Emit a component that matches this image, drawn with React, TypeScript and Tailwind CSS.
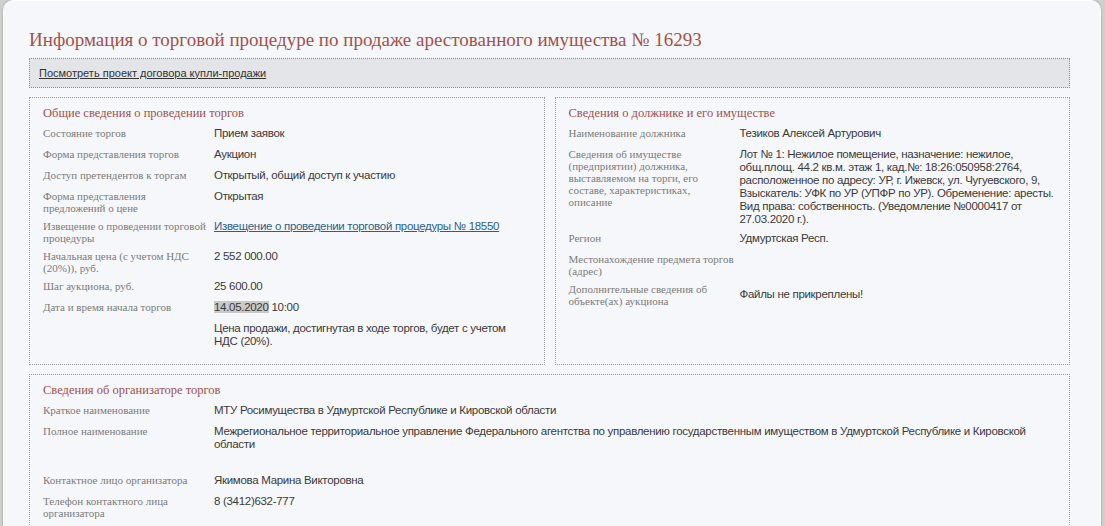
const serif = "font-['Liberation_Serif',Georgia,serif]"
const sans = "font-['Liberation_Sans',Arial,sans-serif] text-[11.5px] tracking-[-0.3px]"

type Row = {
  label: React.ReactNode
  value?: React.ReactNode
  center?: boolean
}

const Label = ({ children }: { children: React.ReactNode }) => (
  <div className={`${serif} text-[11px] leading-[12px] text-[#7b7b7b] whitespace-nowrap`}>{children}</div>
)

const Rows = ({ rows }: { rows: Row[] }) => (
  <div className="flex flex-col">
    {rows.map((r, i) => (
      <div key={i} className="grid grid-cols-[171px_1fr] py-[3px]">
        <Label>{r.label}</Label>
        <div
          className={`${sans} leading-[13px] min-h-[15px] text-[#3a3a3a] ${r.center ? 'self-center' : ''}`}
        >
          {r.value}
        </div>
      </div>
    ))}
  </div>
)

const Box = ({ title, children, className = '' }: { title: string; children: React.ReactNode; className?: string }) => (
  <div className={`border border-dotted border-[#9c9c9c] pl-[13px] pr-[6px] pt-[8px] pb-[13px] ${className}`}>
    <h3 className={`${serif} text-[12.5px] leading-[14px] text-[#a3514b] mb-[4px]`}>{title}</h3>
    {children}
  </div>
)

export default function App() {
  const general: Row[] = [
    { label: 'Состояние торгов', value: 'Прием заявок' },
    { label: 'Форма представления торгов', value: 'Аукцион' },
    { label: 'Доступ претендентов к торгам', value: 'Открытый, общий доступ к участию' },
    { label: <>Форма представления<br />предложений о цене</>, value: 'Открытая' },
    {
      label: <>Извещение о проведении торговой<br />процедуры</>,
      value: (
        <a href="#" className="text-[#2a5f8e] underline">
          Извещение о проведении торговой процедуры № 18550
        </a>
      ),
    },
    { label: <>Начальная цена (с учетом НДС<br />(20%)), руб.</>, value: '2 552 000.00' },
    { label: 'Шаг аукциона, руб.', value: '25 600.00' },
    {
      label: 'Дата и время начала торгов',
      value: (
        <>
          <span className="bg-[#c9c9c9]">14.05.2020</span> 10:00
        </>
      ),
    },
  ]

  const debtor: Row[] = [
    { label: 'Наименование должника', value: 'Тезиков Алексей Артурович' },
    {
      label: (
        <>
          Сведения об имуществе<br />(предприятии) должника,<br />выставляемом на торги, его<br />составе, характеристиках,<br />описание
        </>
      ),
      value: (
        <div className="whitespace-nowrap">
          Лот № 1: Нежилое помещение, назначение: нежилое,<br />
          общ.площ. 44.2 кв.м. этаж 1, кад.№: 18:26:050958:2764,<br />
          расположенное по адресу: УР, г. Ижевск, ул. Чугуевского, 9,<br />
          Взыскатель: УФК по УР (УПФР по УР). Обременение: аресты.<br />
          Вид права: собственность. (Уведомление №0000417 от<br />
          27.03.2020 г.).
        </div>
      ),
    },
    { label: 'Регион', value: 'Удмуртская Респ.' },
    { label: <>Местонахождение предмета торгов<br />(адрес)</> },
    { label: <>Дополнительные сведения об<br />объекте(ах) аукциона</>, value: 'Файлы не прикреплены!', center: true },
  ]

  return (
    <div className="min-h-screen bg-[#cfcfcf] pl-[3px] pr-[4px]">
      <div className="min-h-screen bg-[#f6f7fa] rounded-t-[10px] border border-white shadow-[0_0_2px_rgba(0,0,0,0.3)] pl-[25px] pr-[30px] pt-[27px] pb-6">
        <h1 className={`${serif} text-[19px] leading-[23px] text-[#a3514b] mb-[7px]`}>
          Информация о торговой процедуре по продаже арестованного имущества № 16293
        </h1>

        <div className="border border-dotted border-[#8f8f8f] bg-[#e4e5e8] px-[9px] h-[30px] flex items-center">
          <a href="#" className="font-['Liberation_Sans',Arial,sans-serif] text-[11px] text-[#333] underline">
            Посмотреть проект договора купли-продажи
          </a>
        </div>

        <div className="grid grid-cols-2 gap-[10px] mt-[9px]">
          <Box title="Общие сведения о проведении торгов">
            <Rows rows={general} />
            <div className="grid grid-cols-[171px_1fr] py-[3px]">
              <div />
              <div className={`${sans} leading-[13px] text-[#3a3a3a] whitespace-nowrap`}>
                Цена продажи, достигнутая в ходе торгов, будет с учетом<br />НДС (20%).
              </div>
            </div>
          </Box>
          <Box title="Сведения о должнике и его имуществе">
            <Rows rows={debtor} />
          </Box>
        </div>

        <Box title="Сведения об организаторе торгов" className="mt-[9px] pb-[40px]">
          <Rows
            rows={[
              { label: 'Краткое наименование', value: 'МТУ Росимущества в Удмуртской Республике и Кировской области' },
              {
                label: 'Полное наименование',
                value: (
                  <>
                    Межрегиональное территориальное управление Федерального агентства по управлению государственным
                    имуществом в Удмуртской Республике и Кировской
                    <br />
                    области
                  </>
                ),
              },
            ]}
          />
          <div className="h-[17px]" />
          <Rows
            rows={[
              { label: 'Контактное лицо организатора', value: 'Якимова Марина Викторовна' },
              { label: <>Телефон контактного лица<br />организатора</>, value: '8 (3412)632-777' },
            ]}
          />
        </Box>
      </div>
    </div>
  )
}
